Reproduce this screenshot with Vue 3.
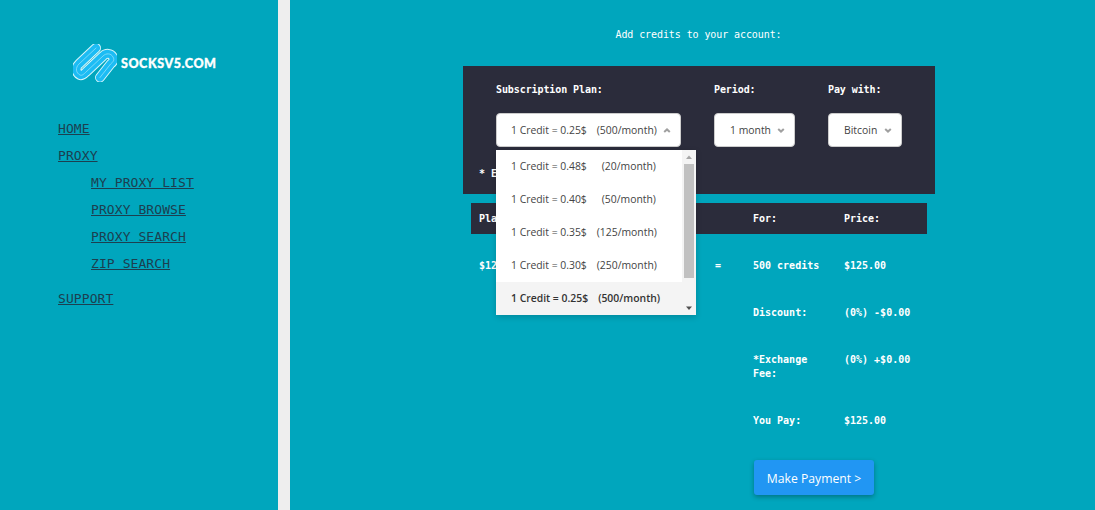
<script setup>
const nav = [
  { label: 'HOME' },
  { label: 'PROXY', children: ['MY PROXY LIST', 'PROXY BROWSE', 'PROXY SEARCH', 'ZIP SEARCH'] },
  { label: 'SUPPORT' },
]
const options = [
  ['1 Credit = 0.48$', '(20/month)', 15],
  ['1 Credit = 0.40$', '(50/month)', 15],
  ['1 Credit = 0.35$', '(125/month)', 10],
  ['1 Credit = 0.30$', '(250/month)', 10],
  ['1 Credit = 0.25$', '(500/month)', 10],
]
const rows = [
  { label: 'Discount:', value: '(0%) -$0.00' },
  { label: '*Exchange Fee:', value: '(0%) +$0.00' },
  { label: 'You Pay:', value: '$125.00' },
]
const clip = 'M23 4 L6 20 C2 24 3 29 7 31 C9 32 11 30 13 28 L30 12 C33 9 38 9 40 13 C42 16 40 18 37.6 20 L27 33.5'
</script>

<template>
  <div class="page">
    <aside class="sidebar">
      <div class="logo">
        <svg width="44" height="38" viewBox="0 0 44 38" fill="none">
          <path class="clip-out" :d="clip"/>
          <path class="clip-in" :d="clip"/>
          <path class="clip-line" :d="clip"/>
        </svg>
        <span class="logo-text">SOCKSV5.COM</span>
      </div>
      <nav class="nav">
        <div v-for="item in nav" :key="item.label" class="nav-group">
          <a class="nav-link">{{ item.label }}</a>
          <div v-if="item.children" class="nav-sub">
            <a v-for="c in item.children" :key="c" class="nav-link">{{ c }}</a>
          </div>
        </div>
      </nav>
    </aside>
    <div class="divider"></div>
    <main class="main">
      <p class="title">Add credits to your account:</p>
      <section class="panel">
        <div class="fields">
          <div class="field">
            <label>Subscription Plan:</label>
            <div class="select plan">
              <span class="val">1 Credit = 0.25$<i class="sp"></i>(500/month)</span>
              <svg class="caret" width="8" height="5" viewBox="0 0 8 5"><path d="M1.2 4 L4 1.4 L6.8 4" fill="none" stroke="#a0a0a0" stroke-width="2"/></svg>
              <div class="dropdown">
                <div class="opts">
                  <div v-for="(o, i) in options" :key="o[0]" class="opt" :class="{ active: i === 4 }">
                    <span>{{ o[0] }}</span><span :style="{ marginLeft: o[2] + 'px' }">{{ o[1] }}</span>
                  </div>
                </div>
                <div class="scroll">
                  <svg width="14" height="14" viewBox="0 0 14 14"><path d="M4 9 L7 5.5 L10 9 Z" fill="#a6a6a6"/></svg>
                  <div class="thumb"></div>
                  <svg class="down" width="14" height="14" viewBox="0 0 14 14"><path d="M4 5.5 L7 9 L10 5.5 Z" fill="#505050"/></svg>
                </div>
              </div>
            </div>
          </div>
          <div class="field period">
            <label>Period:</label>
            <div class="select">
              <span class="val">1 month</span>
              <svg class="caret" width="8" height="5" viewBox="0 0 8 5"><path d="M1.2 1 L4 3.6 L6.8 1" fill="none" stroke="#a0a0a0" stroke-width="2"/></svg>
            </div>
          </div>
          <div class="field pay">
            <label>Pay with:</label>
            <div class="select">
              <span class="val">Bitcoin</span>
              <svg class="caret" width="8" height="5" viewBox="0 0 8 5"><path d="M1.2 1 L4 3.6 L6.8 1" fill="none" stroke="#a0a0a0" stroke-width="2"/></svg>
            </div>
          </div>
        </div>
        <p class="note">* E</p>
      </section>
      <section class="summary">
        <div class="head">
          <span class="c-plan">Pla</span>
          <span class="c-for">For:</span>
          <span class="c-price">Price:</span>
        </div>
        <div class="line first">
          <span class="c-plan">$12</span>
          <span class="c-eq">=</span>
          <span class="c-for">500 credits</span>
          <span class="c-price">$125.00</span>
        </div>
        <div v-for="r in rows" :key="r.label" class="line">
          <span class="c-for">{{ r.label }}</span>
          <span class="c-price">{{ r.value }}</span>
        </div>
        <button class="pay-btn">Make Payment &gt;</button>
      </section>
    </main>
  </div>
</template>

<style>
html, body { margin: 0; background: #00a6bd; overflow: hidden; }
</style>

<style scoped>
.page {
  display: flex;
  height: 510px;
  background: #00a6bd;
  font-family: "DejaVu Sans Mono", monospace;
  color: #fff;
}
.sidebar { width: 278px; flex: none; padding-left: 58px; box-sizing: border-box; }
.logo { display: flex; align-items: center; margin: 44px 0 0 15px; height: 38px; gap: 4px; }
.clip-out { stroke: #d8f6fb; stroke-width: 10; stroke-linecap: round; stroke-linejoin: round; }
.clip-in { stroke: #1cbcf4; stroke-width: 8; stroke-linecap: round; stroke-linejoin: round; }
.clip-line { stroke: #8fe0f8; stroke-width: 0.8; stroke-linecap: round; stroke-linejoin: round; }
.logo-text { font: 900 12.5px "Lato", sans-serif; letter-spacing: 0.55px; color: #fff; white-space: nowrap; -webkit-text-stroke: 0.35px #fff; }
.nav { margin-top: 33px; }
.nav-link {
  display: block;
  font-size: 13px;
  line-height: 27px;
  height: 27px;
  color: #1c3f50;
  text-decoration: underline;
  letter-spacing: 0.08px;
}
.nav-sub { padding-left: 33px; }
.nav-group:last-child { margin-top: 8px; }
.divider { width: 12px; flex: none; background: #eeeeee; }
.main { flex: 1; padding-left: 173px; }
.title { margin: 28px 0 0; width: 471px; text-align: center; font-size: 10px; line-height: 13px; letter-spacing: -0.09px; }
.panel {
  width: 472px;
  height: 128px;
  margin-top: 25px;
  box-sizing: border-box;
  padding: 17px 33px 0 16px;
  background: #2b2c3b;
}
.fields { display: flex; padding-left: 17px; }
.field label { display: block; font-size: 10px; font-weight: 700; line-height: 13px; margin-bottom: 17px; letter-spacing: -0.09px; }
.period { margin-left: 33px; }
.pay { margin-left: 33px; }
.select {
  position: relative;
  display: flex;
  align-items: center;
  justify-content: space-between;
  height: 34px;
  box-sizing: border-box;
  padding: 0 9px 0 15px;
  background: #fff;
  border: 1px solid #ccc;
  border-radius: 4px;
  font: 10.4px "Open Sans", sans-serif;
  color: #444;
  width: 81px;
  white-space: nowrap;
}
.pay .select { width: 74px; }
.select.plan { width: 185px; padding-left: 14px; }
.sp { display: inline-block; width: 10px; }
.dropdown {
  position: absolute;
  top: 36px;
  left: -1px;
  width: 200px;
  height: 165px;
  display: flex;
  background: #fff;
  border-radius: 0 0 0 4px;
  box-shadow: 0 2px 6px rgba(0,0,0,.18);
  z-index: 5;
}
.opts { flex: 1; }
.opt { height: 33px; line-height: 32px; padding-left: 15px; }
.opt.active { background: #f4f4f4; color: #333; font-weight: 600; }
.scroll {
  width: 14px;
  background: #f4f4f4;
  position: relative;
  display: flex;
  flex-direction: column;
  align-items: center;
}
.thumb { width: 10px; height: 114px; background: #c1c1c1; }
.down { position: absolute; bottom: 0; left: 0; }
.note { margin: 20px 0 0; font-size: 10px; font-weight: 700; line-height: 13px; }
.summary { width: 456px; margin-left: 8px; margin-top: 9px; }
.head {
  display: flex;
  height: 31px;
  align-items: center;
  background: #2b2c3b;
  font-size: 10px;
  font-weight: 700;
}
.line {
  display: flex;
  font-size: 10px;
  font-weight: 700;
  line-height: 14px;
  height: 47px;
  align-items: flex-start;
}
.line.first { margin-top: 25px; }
.line:nth-child(4) { height: 61px; }
.c-plan { width: 244px; padding-left: 8px; box-sizing: border-box; }
.c-eq { width: 38px; }
.c-for { width: 91px; padding-right: 20px; box-sizing: border-box; }
.head .c-for { margin-left: 38px; }
.line:not(.first) .c-for { margin-left: 282px; }
.c-price { white-space: nowrap; }
.pay-btn {
  display: block;
  margin: -1px 0 0 283px;
  width: 120px;
  height: 35px;
  padding: 1px 0 0;
  background: #2196f3;
  color: #fff;
  border: 0;
  border-radius: 3px;
  font: 12.2px "Open Sans", sans-serif;
  box-shadow: 0 2px 5px rgba(0,0,0,.3);
}
</style>
